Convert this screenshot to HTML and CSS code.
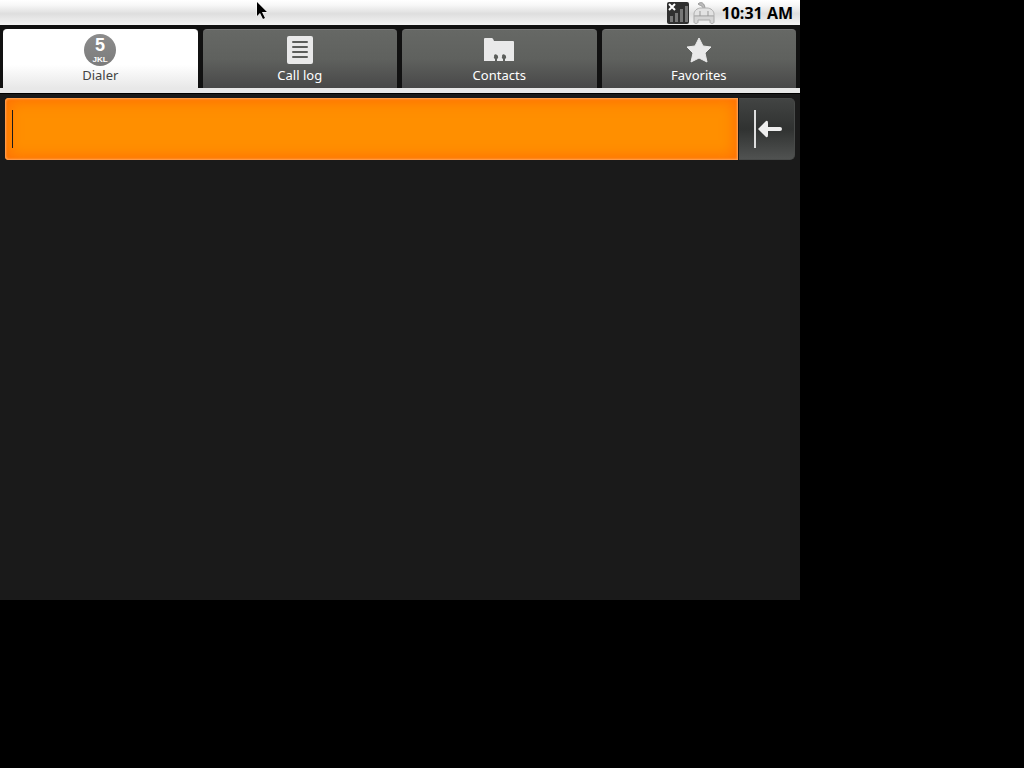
FILE: index.html
```
<!DOCTYPE html>
<html lang="en">

<head>
    <meta charset="UTF-8">
    <meta name="viewport" content="width=device-width, initial-scale=1.0">
    <title>Dialer</title>
    <link rel="stylesheet" href="styles.css">
</head>

<body>

    <div class="screen">

        <header class="statusbar">
            <svg class="signal" width="22" height="22" viewBox="0 0 22 22">
                <rect width="22" height="22" rx="2" fill="#303030" />
                <path d="M2 2l6 6M8 2l-6 6" stroke="#fff" stroke-width="2" />
                <path d="M3 14h3v6H3zM8 11h3v9H8zM13 7h3v13h-3zM18 4h3v16h-3z" fill="#777" />
            </svg>
            <svg class="battery" width="22" height="24" viewBox="0 0 22 24">
                <path d="M10 8C10 4 7 5 5 3c3-3 7-1 7 5" fill="#bbb" stroke="#999" />
                <path d="M1 15v-2c0-3 3-6 7-6h6c4 0 7 3 7 6v2z" fill="#e2e2e2" stroke="#b0b0b0" />
                <path d="M1 15h20v6c0 2-4 2-4 0v-2H5v2c0 2-4 2-4 0z" fill="#d4d4d4" stroke="#aaa" />
                <path d="M7 10v5M15 10v5" stroke="#999" fill="none" />
            </svg>
            <span class="clock">10:31 AM</span>
        </header>

        <nav class="tabs">
            <button class="tab selected" type="button">
                <svg width="32" height="32" viewBox="0 0 32 32">
                    <defs>
                        <linearGradient id="key" x1="0" y1="0" x2="0" y2="1">
                            <stop offset="0" stop-color="#8c8c8c" />
                            <stop offset="1" stop-color="#7c7c7c" />
                        </linearGradient>
                    </defs>
                    <circle cx="16" cy="16" r="16" fill="url(#key)" />
                    <text class="digit" x="16" y="17">5</text>
                    <text class="letters" x="16" y="28">JKL</text>
                </svg>
                <span>Dialer</span>
            </button>
            <button class="tab" type="button">
                <svg width="32" height="32" viewBox="0 0 32 32">
                    <rect x="3" y="2" width="26" height="28" rx="2" fill="#e9e9e9" />
                    <path d="M9 8h14M9 13h14M9 18h14M9 23h14" stroke="#5c5e5b" stroke-width="2" stroke-linecap="round" />
                </svg>
                <span>Call log</span>
            </button>
            <button class="tab" type="button">
                <svg width="32" height="32" viewBox="0 0 32 32">
                    <path d="M1 5q0-1 1-1h7q1 0 2 3h19q1 0 1 1v19h-9v-2a2 2 0 1 0-2 0v2h-6v-2a2 2 0 1 0-2 0v2H1z" fill="#e9e9e9" />
                    <path d="M11 21.500a2 2 0 1 1 3 2.500v3h-2v-3zM19 21.500a2 2 0 1 1 3 2.500v3h-2v-3z" fill="#5c5e5b" />
                </svg>
                <span>Contacts</span>
            </button>
            <button class="tab" type="button">
                <svg width="32" height="32" viewBox="0 0 32 32">
                    <path d="M16 4l4 8 8 1-6 6 2 9-8-4-8 4 2-9-6-6 8-1z" fill="#e9e9e9" stroke="#e9e9e9" stroke-linejoin="round" />
                </svg>
                <span>Favorites</span>
            </button>
        </nav>

        <div class="entry">
            <label class="field">
                <span class="caret"></span>
                <input class="number" type="tel" aria-label="Phone number">
            </label>
            <button class="delete" type="button" aria-label="Delete">
                <svg width="32" height="40" viewBox="0 0 32 40">
                    <path d="M4 1v38" stroke="#dedede" stroke-width="2" />
                    <path d="M7 20l8-8q2-1 2 2v4h12q2 0 2 2t-2 2H17v4q0 3-2 2z" fill="#eee" />
                </svg>
            </button>
        </div>

        <svg class="pointer" width="12" height="19" viewBox="0 0 12 19">
            <path d="M1 1v14l3-3 3 6 2-1-3-6h5z" fill="#000" stroke="#fff" stroke-width="1" paint-order="stroke" />
        </svg>

    </div>

</body>

</html>
```
FILE: styles.css
```
body {
    margin: 0;
    background-color: #000;
    font-family: "Noto Sans", "Open Sans", sans-serif;
}

.screen {
    position: relative;
    max-width: 800px;
    min-height: 600px;
    background-color: #1a1a1a;
}

.statusbar {
    display: flex;
    align-items: center;
    justify-content: flex-end;
    gap: 4px;
    height: 25px;
    padding-right: 7px;
    background: linear-gradient(#fff 0%, #f8f8f8 20%, #dedede 55%, #f4f4f4 100%);
}

.clock {
    margin-left: 3px;
    color: #000;
    font-family: "Open Sans", "Noto Sans", sans-serif;
    font-size: 16px;
    font-weight: bold;
    line-height: 24px;
}

.tabs {
    display: flex;
    gap: 5px;
    padding: 4px 4px 0 3px;
    background-color: #111;
    border-bottom: 5px solid #e8e8e8;
}

.tab {
    display: flex;
    flex: 1;
    flex-direction: column;
    align-items: center;
    height: 59px;
    padding: 4px 0 0;
    border: 0;
    border-top: 1px solid #777;
    border-radius: 4px 4px 0 0;
    background: linear-gradient(#666865, #5f615e 50%, #484848);
    color: #fff;
    font-family: inherit;
    font-size: 13px;
    line-height: 19px;
}

.tab.selected {
    border-color: #fff;
    background: linear-gradient(#fff 60%, #e8e8e8);
    color: #444;
}

.digit,
.letters {
    fill: #fff;
    font-family: "Liberation Sans", sans-serif;
    font-weight: bold;
    text-anchor: middle;
}

.digit {
    font-size: 18px;
}

.letters {
    font-size: 8px;
}

.entry {
    display: flex;
    gap: 1px;
    padding: 4px 5px 5px;
    border-top: 1px solid #000;
}

.field {
    display: flex;
    flex: 1;
    align-items: center;
    height: 62px;
    box-sizing: border-box;
    padding-left: 7px;
    border-radius: 4px 0 0 4px;
    background-color: #ff8f00;
    box-shadow: inset 0 0 2px 1px #ffa45c, inset 0 0 14px 4px #ff7204;
}

.caret {
    width: 1px;
    height: 38px;
    background-color: #1a1a1a;
}

.number {
    flex: 1;
    min-width: 0;
    border: 0;
    outline: 0;
    background: transparent;
    font-family: inherit;
    font-size: 28px;
}

.delete {
    display: flex;
    align-items: center;
    justify-content: center;
    width: 56px;
    padding: 0;
    border: 1px solid #484a49;
    border-left: 0;
    border-radius: 0 5px 5px 0;
    background: linear-gradient(#424443, #303231 50%, #505251);
}

/* mouse pointer over the status bar */
.pointer {
    position: absolute;
    top: 1px;
    left: 256px;
}
```
